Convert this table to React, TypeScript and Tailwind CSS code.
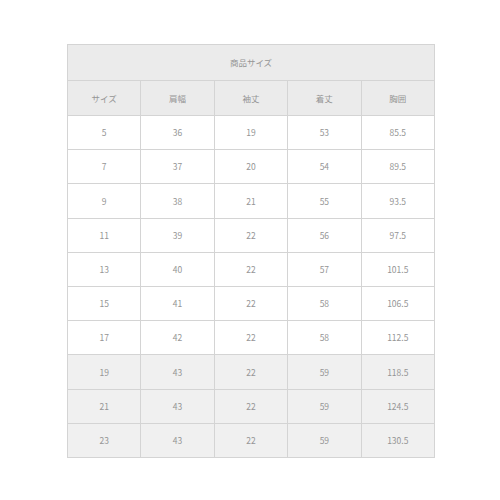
const rows = [
  ['5', '36', '19', '53', '85.5'],
  ['7', '37', '20', '54', '89.5'],
  ['9', '38', '21', '55', '93.5'],
  ['11', '39', '22', '56', '97.5'],
  ['13', '40', '22', '57', '101.5'],
  ['15', '41', '22', '58', '106.5'],
  ['17', '42', '22', '58', '112.5'],
  ['19', '43', '22', '59', '118.5'],
  ['21', '43', '22', '59', '124.5'],
  ['23', '43', '22', '59', '130.5'],
]

const heads = ['サイズ', '肩幅', '袖丈', '着丈', '胸囲']

export default function App() {
  return (
    <div className="w-[500px] h-[500px] bg-white pt-[44px] pl-[67px] font-['Noto_Sans_CJK_JP','Noto_Sans',sans-serif] text-[8.5px] text-[#959595]">
      <table className="w-[368px] border-collapse table-fixed text-center">
        <thead>
          <tr className="h-[36px] bg-[#ebebeb]">
            <th colSpan={5} className="border border-[#d4d4d4] font-normal">商品サイズ</th>
          </tr>
          <tr className="h-[35px] bg-[#ebebeb]">
            {heads.map((h) => (
              <th key={h} className="border border-[#d4d4d4] font-normal">{h}</th>
            ))}
          </tr>
        </thead>
        <tbody>
          {rows.map((r, i) => (
            <tr key={r[0]} className={i >= 7 ? 'h-[34.2px] bg-[#f0f0f0]' : 'h-[34.2px] bg-white'}>
              {r.map((c, j) => (
                <td key={j} className="border border-[#d4d4d4]">{c}</td>
              ))}
            </tr>
          ))}
        </tbody>
      </table>
    </div>
  )
}
